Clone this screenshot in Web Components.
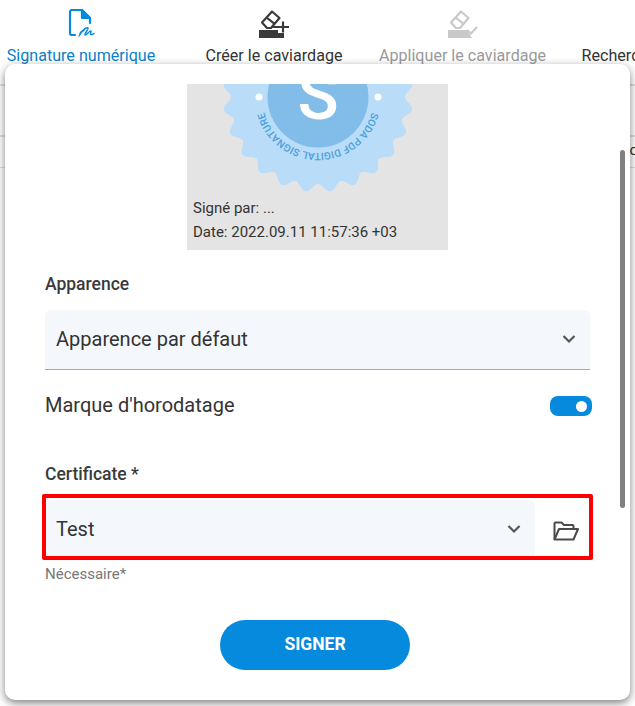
<!DOCTYPE html>
<html lang="fr">
<head>
<meta charset="utf-8">
<title>Signature numérique</title>
<style>
html, body { margin: 0; height: 100%; background: #fff; overflow: hidden; }
body { font-family: Roboto, "Liberation Sans", sans-serif; color: #333; }
</style>
</head>
<body>
<app-shell>
  <tool-bar slot="toolbar">
    <tool-item active label="Signature numérique" width="148" icon="sign"></tool-item>
    <span class="sep" style="width:1px;height:30px;margin:25px 26px 0 24px;background:#bbb"></span>
    <tool-item label="Créer le caviardage" width="138" icon="redact"></tool-item>
    <tool-item disabled label="Appliquer le caviardage" width="167" icon="apply" style="margin-left:36px"></tool-item>
    <tool-item label="Rechercher" width="80" style="margin-left:36px"></tool-item>
  </tool-bar>
  <sign-dialog slot="dialog">
    <seal-preview></seal-preview>
    <field-label style="margin-top:25px">Apparence</field-label>
    <select-box style="margin-top:17px;height:60px;padding-bottom:2px" underline>Apparence par défaut</select-box>
    <toggle-row style="margin-top:26px">Marque d'horodatage</toggle-row>
    <field-label style="margin-top:49px">Certificate *</field-label>
    <cert-row style="margin-top:17px"></cert-row>
    <div style="font-size:15px;line-height:16px;color:#777;margin-top:8px">Nécessaire*</div>
    <sign-button style="margin-top:38px">SIGNER</sign-button>
  </sign-dialog>
</app-shell>
<script>
class AppShell extends HTMLElement {
  constructor() {
    super();
    this.attachShadow({ mode: "open" });
    this.shadowRoot.innerHTML = `
<style>
:host { display: block; position: relative; width: 635px; height: 706px; overflow: hidden; background: #fff; }
.band { height: 49px; margin-top: 20px; border-top: 2px solid #e0e0e0; border-bottom: 2px solid #e0e0e0; }
.band.low { height: 30px; margin-top: 0; border-top: 0; border-bottom: 1px solid #ddd; }
.peek { position: absolute; right: -3px; top: 141px; font-size: 15px; color: #333; }
.dialog { position: absolute; left: 5px; top: 64px; }
</style>
<slot name="toolbar"></slot>
<div class="band"></div>
<div class="band low"></div>
<div class="peek">Co</div>
<div class="dialog"><slot name="dialog"></slot></div>`;
  }
}

const ICONS = {
  sign: `<svg width="30" height="30" viewBox="0 0 30 30" fill="none" stroke="#068ade" stroke-width="2.200" stroke-linecap="round" stroke-linejoin="round">
    <path d="M9 26H6a2 2 0 0 1-2-2V3a2 2 0 0 1 2-2h10l8 8v5"/>
    <path d="M16 1l8 8h-8z" fill="#068ade"/>
    <path stroke-width="1.400" d="M13 27c3-5 7-9 9-8 1 1-4 6-3 7 1 1 5-5 6-4 .7.700-1.500 3-.5 3.500.8.300 2-.5 3.500-1.200"/>
    <path stroke-width="1.400" d="M14 24.500c1-2 3-3 4-3.500"/>
  </svg>`,
  redact: `<svg width="30" height="30" viewBox="0 0 30 30" fill="none" stroke="#3a3a3a">
    <path stroke-width="2.200" stroke-linejoin="round" d="M3 13.500 13 2.500l7.500 6.500L12 19H8z"/>
    <path stroke-width="2.200" d="M7.500 8.500l7.800 6.200"/>
    <path fill="#3a3a3a" stroke="none" d="M0 21h19v3h6v5H0z"/>
    <path stroke-width="2.200" d="M24 12.500v11M13.500 18H30"/>
  </svg>`,
  apply: `<svg width="30" height="30" viewBox="0 0 30 30" fill="none" stroke="#c9c9c9">
    <path stroke-width="2.200" stroke-linejoin="round" d="M3 13.500 13 2.500l7.500 6.500L12 19H8z"/>
    <path stroke-width="2.200" d="M7.500 8.500l7.800 6.200"/>
    <path fill="#c9c9c9" stroke="none" d="M0 21h19l5 8H0z"/>
    <path stroke-width="2" d="M19 21l4 3.500 6-6.500"/>
  </svg>`
};

class ToolBar extends HTMLElement {
  constructor() {
    super();
    this.attachShadow({ mode: "open" });
    this.shadowRoot.innerHTML = `
<style>
:host { display: flex; align-items: flex-start; height: 64px; padding-left: 7px; white-space: nowrap; background: #fff; }
</style>
<slot></slot>`;
  }
}

class ToolItem extends HTMLElement {
  constructor() {
    super();
    this.attachShadow({ mode: "open" });
  }
  connectedCallback() {
    const color = this.hasAttribute("active") ? "#0a7fcb" : this.hasAttribute("disabled") ? "#9a9a9a" : "#333";
    const icon = ICONS[this.getAttribute("icon")] || "";
    this.shadowRoot.innerHTML = `
<style>
:host { display: flex; flex-direction: column; align-items: center; flex: none; width: ${this.getAttribute("width")}px; color: ${color}; font-size: 16.100px; line-height: 18px; }
.icon { height: 30px; margin-top: 9px; width: 30px; }
.label { margin-top: 8px; }
</style>
<div class="icon">${icon}</div>
<div class="label">${this.getAttribute("label")}</div>`;
  }
}

class SignDialog extends HTMLElement {
  constructor() {
    super();
    this.attachShadow({ mode: "open" });
    this.shadowRoot.innerHTML = `
<style>
:host { display: block; position: relative; box-sizing: border-box; width: 625px; height: 636px; padding: 20px 40px 0; background: #fff; border-radius: 10px; box-shadow: 0 3px 8px rgba(0,0,0,.5); }
.scroll { position: absolute; left: 615px; top: 86px; width: 5px; height: 358px; border-radius: 3px; background: #808080; }
</style>
<slot></slot>
<div class="scroll"></div>`;
  }
}

class SealPreview extends HTMLElement {
  constructor() {
    super();
    this.attachShadow({ mode: "open" });
    // bord festonné du sceau
    let d = "";
    for (let a = 0; a <= 720; a++) {
      const t = a / 720 * Math.PI * 2;
      const r = 91 + 4 * Math.cos(24 * t + Math.PI);
      const x = 131 + r * Math.sin(t);
      const y = 13 + r * Math.cos(t);
      d += (a ? "L" : "M") + x.toFixed(1) + " " + y.toFixed(1);
    }
    this.shadowRoot.innerHTML = `
<style>
:host { display: block; box-sizing: border-box; width: 261px; height: 166px; margin-left: 142px; background: #e4e4e4; position: relative; overflow: hidden; font-size: 15px; color: #333; }
svg { display: block; }
.lines { position: absolute; left: 6px; top: 112px; line-height: 24px; }
</style>
<svg width="261" height="112" viewBox="0 0 261 112">
  <path d="${d}Z" fill="#b9dcf8"/>
  <circle cx="131" cy="13" r="50.500" fill="#81bde8"/>
  <circle cx="72" cy="13" r="3.500" fill="#fff"/>
  <circle cx="191" cy="13" r="3.500" fill="#fff"/>
  <path id="arc" d="M 187 13 A 56 56 0 0 1 75 13" fill="none"/>
  <text font-family="Roboto, sans-serif" font-size="10.200" font-weight="500" fill="#4a9fdc">
    <textPath href="#arc" startOffset="50%" text-anchor="middle">SODA PDF DIGITAL SIGNATURE</textPath>
  </text>
  <text x="131" y="35" text-anchor="middle" font-family="Roboto, sans-serif" font-size="68" font-weight="500" fill="#fff">S</text>
</svg>
<div class="lines">Signé par: ...<br>Date: 2022.09.11 11:57:36 +03</div>`;
  }
}

class FieldLabel extends HTMLElement {
  constructor() {
    super();
    this.attachShadow({ mode: "open" });
    this.shadowRoot.innerHTML = `
<style>
:host { display: block; font-size: 17.500px; font-weight: 500; line-height: 18px; color: #3a3a3a; }
</style>
<slot></slot>`;
  }
}

const CHEVRON = `<svg width="14" height="10" viewBox="0 0 14 10" fill="none" stroke="#555" stroke-width="2.200"><path d="M1.500 2l5.500 5.500L12.500 2"/></svg>`;

class SelectBox extends HTMLElement {
  constructor() {
    super();
    this.attachShadow({ mode: "open" });
    this.shadowRoot.innerHTML = `
<style>
:host { display: flex; align-items: center; justify-content: space-between; box-sizing: border-box; padding: 0 14px 0 11px; background: #f4f8fc; border-radius: 6px 6px 0 0; font-size: 20px; color: #333; }
:host([underline]) { border-bottom: 1px solid #7fb3d9; }
</style>
<span><slot></slot></span>${CHEVRON}`;
  }
}

class ToggleRow extends HTMLElement {
  constructor() {
    super();
    this.attachShadow({ mode: "open" });
    this.shadowRoot.innerHTML = `
<style>
:host { display: flex; align-items: center; justify-content: space-between; height: 20px; margin-right: -2px; font-size: 20px; color: #333; }
.text { margin-top: -2px; }
.track { display: flex; align-items: center; justify-content: flex-end; box-sizing: border-box; width: 42px; height: 20px; padding-right: 5px; border-radius: 8px; background: #068ade; }
.knob { width: 11px; height: 11px; border-radius: 50%; background: #fff; }
</style>
<span class="text"><slot></slot></span>
<div class="track"><div class="knob"></div></div>`;
  }
}

class CertRow extends HTMLElement {
  constructor() {
    super();
    this.attachShadow({ mode: "open" });
    this.shadowRoot.innerHTML = `
<style>
:host { display: flex; position: relative; height: 58px; }
select-box { flex: 0 0 490px; }
.open { flex: 1; display: flex; align-items: center; justify-content: center; padding: 3px 0 0 7px; }
.mark { position: absolute; left: -3px; right: -3px; top: -6px; bottom: -2px; border: 4px solid #f00; border-radius: 2px; pointer-events: none; }
</style>
<select-box>Test</select-box>
<div class="open">
  <svg width="26" height="20" viewBox="0 0 26 20" fill="none" stroke="#4a4a4a" stroke-width="2" stroke-linejoin="round">
    <path d="M1.500 18.500V2.500a1 1 0 0 1 1-1h6l2.500 2.500h8.500a1 1 0 0 1 1 1v3"/>
    <path d="M1.500 18.500 6 8h19l-4.500 10.500z"/>
  </svg>
</div>
<div class="mark"></div>`;
  }
}

class SignButton extends HTMLElement {
  constructor() {
    super();
    this.attachShadow({ mode: "open" });
    this.shadowRoot.innerHTML = `
<style>
:host { display: flex; align-items: center; justify-content: center; box-sizing: border-box; width: 190px; height: 50px; padding-bottom: 2px; margin-left: 175px; border-radius: 25px; background: #068ade; color: #fff; font-size: 17.500px; font-weight: 700; }
</style>
<slot></slot>`;
  }
}

customElements.define("app-shell", AppShell);
customElements.define("tool-bar", ToolBar);
customElements.define("tool-item", ToolItem);
customElements.define("sign-dialog", SignDialog);
customElements.define("seal-preview", SealPreview);
customElements.define("field-label", FieldLabel);
customElements.define("select-box", SelectBox);
customElements.define("toggle-row", ToggleRow);
customElements.define("cert-row", CertRow);
customElements.define("sign-button", SignButton);
</script>
</body>
</html>
